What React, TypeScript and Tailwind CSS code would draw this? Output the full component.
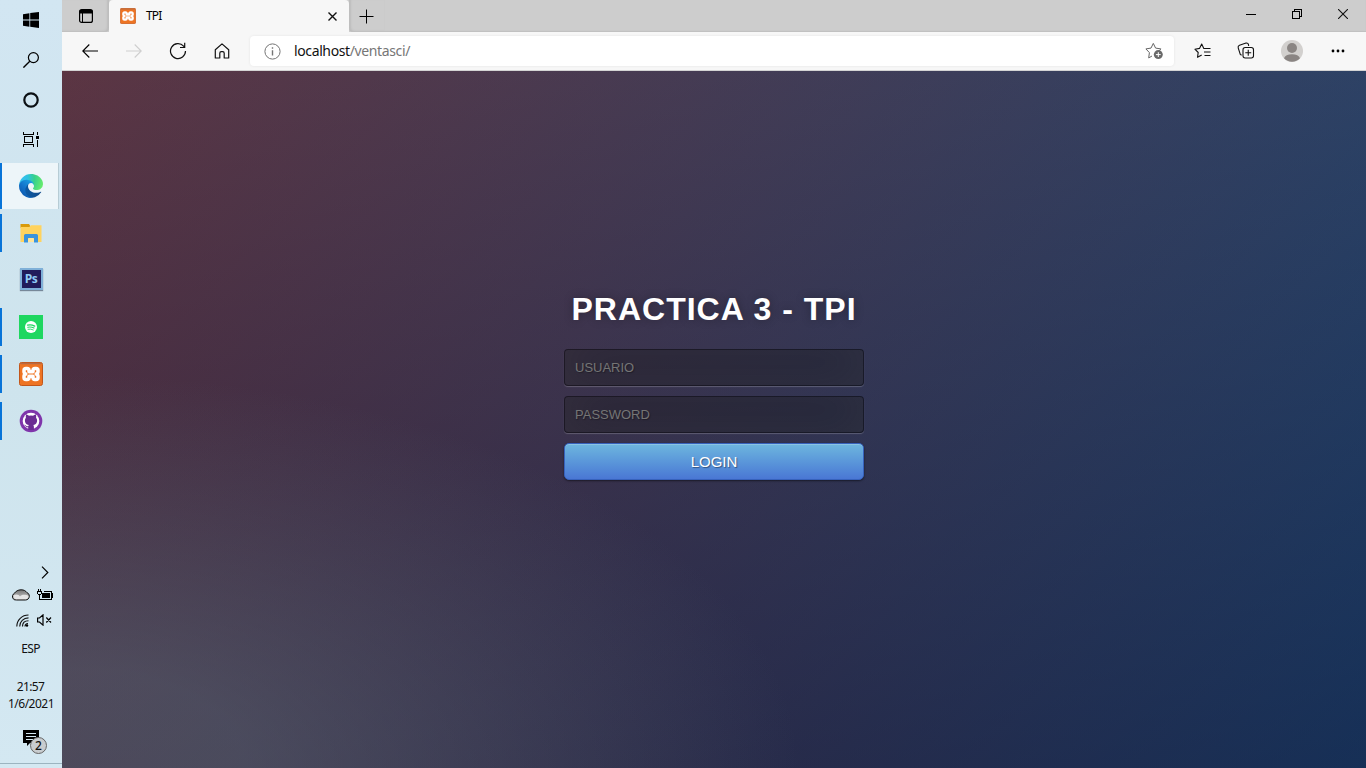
import React from "react";

type IconProps = { className?: string };

function WindowsIcon() {
  return (
    <svg width="16" height="16" viewBox="0 0 16 16" fill="#000">
      <path d="M0 2.2 6.4 1.2V7.4H0zM7.2 1.1 16 0V7.4H7.2zM0 8.4H6.4V14.7L0 13.8zM7.2 8.4H16V16L7.2 14.8z" />
    </svg>
  );
}

function SearchIcon() {
  return (
    <svg width="16" height="16" viewBox="0 0 16 16" fill="none" stroke="#000" strokeWidth="1.2">
      <circle cx="10.4" cy="5.6" r="5" />
      <path d="M6.8 9.2 .4 15.6" strokeWidth="1.4" />
    </svg>
  );
}

function CortanaIcon() {
  return (
    <svg width="16" height="16" viewBox="0 0 16 16" fill="none" stroke="#0b1014" strokeWidth="2.2">
      <circle cx="8" cy="8" r="6.7" />
    </svg>
  );
}

function TaskViewIcon() {
  return (
    <svg width="16" height="15" viewBox="0 0 16 15" fill="none" stroke="#000" shapeRendering="crispEdges">
      <path d="M.5 0V2.500H10.500V0M1.500 4.500H9.500V10.500H1.500zM.5 15V12.500H10.500V15M14.500 0V3M14.500 8V15" />
      <rect x="13" y="4" width="3" height="3" fill="#000" stroke="none" />
    </svg>
  );
}

function EdgeIcon() {
  return (
    <svg width="24" height="24" viewBox="0 0 256 256">
      <defs>
        <linearGradient id="edgeDark" x1="63" x2="241" y1="178" y2="178" gradientUnits="userSpaceOnUse">
          <stop stopColor="#0c59a4" />
          <stop offset="1" stopColor="#114a8b" />
        </linearGradient>
        <linearGradient id="edgeMid" x1="153" x2="46" y1="100" y2="216" gradientUnits="userSpaceOnUse">
          <stop stopColor="#1b9de2" />
          <stop offset=".6" stopColor="#1374cb" />
          <stop offset="1" stopColor="#0e5fb5" />
        </linearGradient>
        <radialGradient id="edgeTop" cx="26" cy="46" r="232" gradientUnits="userSpaceOnUse">
          <stop stopColor="#35c1f1" />
          <stop offset=".3" stopColor="#2fc2df" />
          <stop offset=".6" stopColor="#36d08c" />
          <stop offset="1" stopColor="#66eb6e" />
        </radialGradient>
      </defs>
      <path fill="url(#edgeDark)" d="M231 190a94 94 0 0 1-10.500 4.700 102 102 0 0 1-35.900 6.500c-47.300 0-88.500-32.500-88.500-74.300A31.500 31.500 0 0 1 112.600 99.500c-42.800 1.800-53.800 46.400-53.800 72.500 0 73.900 68.100 81.400 82.800 81.400 7.900 0 19.800-2.300 27-4.600l1.300-.4a128.300 128.300 0 0 0 66.600-52.800 4 4 0 0 0-5.500-5.600z" />
      <path fill="url(#edgeMid)" d="M105.700 241.400A79.200 79.200 0 0 1 83 220.100 80.700 80.700 0 0 1 112.500 99.600c3.200-1.500 8.500-4.100 15.600-4a32.400 32.400 0 0 1 25.700 13 31.900 31.900 0 0 1 6.300 18.700c0-.2 24.500-79.600-80-79.600C36.200 47.700.1 89.300.1 126a130.200 130.200 0 0 0 12.100 56 128 128 0 0 0 156.400 67 75.500 75.500 0 0 1-62.800-8z" />
      <path fill="url(#edgeTop)" d="M152.300 148.900c-.9 1-3.400 2.500-3.400 5.600 0 2.600 1.700 5.200 4.800 7.300 14.400 10 41.500 8.700 41.600 8.700 10.700 0 21.100-2.900 30.300-8.300A61.400 61.400 0 0 0 256 109.200c.3-22.500-8-37.400-11.300-44C223.500 23.800 177.700 0 128 0A128 128 0 0 0 0 126.200c.5-36.500 36.800-66 80-66 3.500 0 23.500.3 42 10 16.300 8.600 24.900 19 30.800 29.200 6.200 10.700 7.300 24.100 7.300 29.500s-2.700 13.300-7.800 20z" />
    </svg>
  );
}

function FolderIcon() {
  return (
    <svg width="22" height="19" viewBox="0 0 22 19">
      <path d="M.5 0H9l1.300 2L9 4H.5z" fill="#d99a0b" />
      <path d="M.5 3H9.500L11 1.200H21.500V18H.5z" fill="#ffd35f" />
      <path d="M4 18V11.500Q4 10 5.500 10H16.500Q18 10 18 11.500V18.500H14V15Q14 14 13 14H9Q8 14 8 15V18.500H4z" fill="#3a93dd" />
      <path d="M8 15Q8 14 9 14H13Q14 14 14 15V18H8z" fill="#ffe59b" />
    </svg>
  );
}

function PhotoshopIcon() {
  return (
    <span className="mb-[3px] flex h-[22px] w-[23px] items-center justify-center border-2 border-[#7fb0d8] bg-[#211c5b] font-['Open_Sans',sans-serif] text-[12px] leading-none font-bold tracking-[-0.4px] text-[#8fcaf5] shadow-[0_1px_1px_#789]">
      Ps
    </span>
  );
}

function SpotifyIcon() {
  return (
    <svg width="24" height="24" viewBox="0 0 24 24" fill="none" stroke="#1ed760" strokeLinecap="round">
      <path d="M0 0H24V24H0z" fill="#1ed760" stroke="none" />
      <circle cx="12" cy="12" r="6" fill="#fff" stroke="none" />
      <path d="M8.500 10.200q3.700-1 7.200.9" strokeWidth="1.300" />
      <path d="M8.800 12.300q3.200-.8 6.200.8" strokeWidth="1.100" />
      <path d="M9 14.200q2.800-.6 5.300.7" strokeWidth=".9" />
    </svg>
  );
}

function XamppIcon({ className }: IconProps) {
  return (
    <svg className={className} viewBox="0 0 24 24" fill="none">
      <rect x=".5" y=".5" width="23" height="23" rx="2" fill="#ee7423" stroke="#c2561a" />
      <path d="M1.500 1.500H22.500" stroke="#b86a43" strokeWidth="1.500" />
      <path
        d="M8 6.600H7a2 2 0 0 0-2 2v1a2.500 2.500 0 0 0 1.800 2.400A2.500 2.500 0 0 0 5 14.400v1a2 2 0 0 0 2 2h1a2 2 0 0 0 2-2v-1.200h4v1.200a2 2 0 0 0 2 2h1a2 2 0 0 0 2-2v-1a2.500 2.500 0 0 0-1.800-2.400A2.500 2.500 0 0 0 19 9.600v-1a2 2 0 0 0-2-2h-1a2 2 0 0 0-2 2v1.200h-4V8.600a2 2 0 0 0-2-2z"
        stroke="#fff"
        strokeWidth="3.500"
        strokeLinejoin="round"
      />
    </svg>
  );
}

function GithubIcon() {
  return (
    <svg width="24" height="24" viewBox="0 0 24 24">
      <circle cx="12" cy="12" r="11.300" fill="#7f35ab" />
      <circle cx="12" cy="12" r="8.300" fill="#fff" />
      <path
        d="M9.200 21v-2.800c-2 .3-2.800-.7-3.300-1.600l-.9-.8c1.500-.3 1.900 1.200 3.100 1.400h1.200l.4-1.100C7 15.700 5.900 13.800 5.900 11.600c0-1 .4-2 1-2.800-.2-.9-.2-2.100.2-3.200 1.100 0 2 .6 2.800 1.200a9 9 0 0 1 4.200 0c.8-.6 1.700-1.200 2.800-1.200.4 1.100.4 2.300.2 3.200.6.800 1 1.800 1 2.800 0 2.200-1.100 4.100-3.800 4.500.4.500.6 1.100.6 1.900v3z"
        fill="#6b2c94"
      />
    </svg>
  );
}

function CloudIcon() {
  return (
    <svg width="18" height="12" viewBox="0 0 18 12">
      <defs>
        <linearGradient id="cloudFill" x1="0" y1="0" x2="0" y2="1">
          <stop stopColor="#777" />
          <stop offset="1" stopColor="#ccc" />
        </linearGradient>
      </defs>
      <path
        d="M4.500 11A3.500 3.500 0 0 1 2 4.600C3.800 2.300 6 .8 9 .8c3 0 4.600 1 5.800 2.700C16.500 4.200 17.300 5.500 17.300 7.200 17.300 9.400 15.600 11 13.500 11z"
        fill="url(#cloudFill)"
      />
      <path d="M1.500 6.500C4 4.500 7 5.500 8 7.500c1-1.700 5-2.500 9-.5-.3 2.300-1.800 3.500-4 3.500H4.500C2.700 10 1.500 8.500 1.500 6.500z" fill="#e5e5e5" />
      <path
        d="M4.500 11A3.500 3.500 0 0 1 2 4.600C3.800 2.300 6 .8 9 .8c3 0 4.600 1 5.800 2.700C16.500 4.200 17.300 5.500 17.300 7.200 17.300 9.400 15.600 11 13.500 11z"
        fill="none"
        stroke="#111"
      />
    </svg>
  );
}

function BatteryIcon() {
  return (
    <svg width="16" height="12" viewBox="0 0 16 12" shapeRendering="crispEdges" fill="none" stroke="#000">
      <path d="M7 2.500H14.500V10.500H3M15.500 4V9M1.500 0V2M3.500 0V2M.5 2V5M4.500 2V5M0 2.500H5M1 5.500H4M2.500 6V11" />
      <rect x="5" y="4" width="8" height="5" fill="#000" stroke="none" />
    </svg>
  );
}

function WifiIcon() {
  return (
    <svg width="13" height="13" viewBox="0 0 13 13" fill="none" stroke="#111" strokeWidth="1.100">
      <path d="M.8 12.500C.8 6 6 1 12.500 1M3.700 12.500C3.700 7.500 7.500 3.900 12.500 3.900M6.500 12.500C6.500 9 9 6.800 12.500 6.800" />
      <path d="M9 12.500a3 3 0 0 1 3-3" />
      <circle cx="11" cy="11.500" r="1.200" fill="#000" stroke="none" />
    </svg>
  );
}

function MutedIcon() {
  return (
    <svg width="15" height="12" viewBox="0 0 15 12" fill="none" stroke="#000" strokeWidth="1.200">
      <path d="M.6 4H2.500L6 .9V11.100L2.500 8H.6zM9.300 3.500l4.700 5M14 3.500l-4.700 5" />
    </svg>
  );
}

function TaskItem({ children, open, active }: { children: React.ReactNode; open?: boolean; active?: boolean }) {
  return (
    <div className="flex h-[47px] items-start">
      <span
        className={
          active
            ? "h-[46px] w-[2px] bg-[#0874d8]"
            : open
              ? "mt-1 h-[38px] w-[2px] bg-[#0874d8]"
              : "mt-1 h-[38px] w-[2px]"
        }
      />
      <span
        className={
          active
            ? "flex h-[46px] w-[57px] items-center justify-center border-r border-[#b7ccd5] bg-[#edf5f9] pl-[2px]"
            : "flex h-[46px] w-[58px] items-center justify-center"
        }
      >
        {children}
      </span>
    </div>
  );
}

function Taskbar() {
  return (
    <aside className="flex h-full w-[62px] shrink-0 flex-col bg-linear-to-b from-[#d2e6f2] via-[#cee4ed] to-[#d4e8f2] font-['Noto_Sans','Open_Sans',sans-serif] text-[#111]">
      <div className="flex h-10 items-center justify-center"><WindowsIcon /></div>
      <div className="flex h-10 items-center justify-center"><SearchIcon /></div>
      <div className="flex h-10 items-center justify-center"><CortanaIcon /></div>
      <div className="mb-[3px] flex h-10 items-center justify-center pb-px"><TaskViewIcon /></div>
      <TaskItem active><EdgeIcon /></TaskItem>
      <TaskItem open><FolderIcon /></TaskItem>
      <TaskItem><PhotoshopIcon /></TaskItem>
      <TaskItem open><SpotifyIcon /></TaskItem>
      <TaskItem open><XamppIcon className="size-6" /></TaskItem>
      <TaskItem open><GithubIcon /></TaskItem>

      <div className="mt-auto flex h-[204px] flex-col">
        <div className="flex h-4 items-center justify-end pr-[13px]">
          <svg width="8" height="13" viewBox="0 0 8 13" fill="none" stroke="#000" strokeWidth="1.200">
            <path d="M1 .7 6.800 6.500 1 12.300" />
          </svg>
        </div>
        <div className="mt-[9px] flex h-3 items-center gap-[7px] pl-3">
          <CloudIcon />
          <BatteryIcon />
        </div>
        <div className="mt-3 flex h-[14px] items-center gap-2 pl-4">
          <WifiIcon />
          <MutedIcon />
        </div>
        <div className="mt-[14px] pr-px text-center text-[12px] leading-4 tracking-[-0.65px]">ESP</div>
        <div className="mt-[21px] pr-px text-center text-[12px] leading-[17px] tracking-[-0.6px]">21:57</div>
        <div className="text-center text-[12px] leading-[17px] tracking-[-0.5px]">1/6/2021</div>
        <div className="relative mt-[18px] ml-[23px] h-[33px] w-6">
          <svg width="16" height="16" viewBox="0 0 16 16">
            <path d="M0 0H16V13H7L4 16V13H0z" fill="#000" />
            <path d="M3 3.500H13M3 6.500H13M3 9.500H10" stroke="#d4e8f2" />
          </svg>
          <span className="absolute top-[7px] left-[7px] flex size-[17px] items-center justify-center rounded-full border border-[#666] bg-[#c8cccf] text-[12px] leading-none font-medium">
            2
          </span>
        </div>
        <div className="border-t border-[#9cb4c0]" />
      </div>
    </aside>
  );
}

function TabStrip() {
  return (
    <div className="flex h-8 items-stretch bg-[#cdcdcd]">
      <div className="flex w-[47px] items-center justify-center rounded-br-[4px] pl-px shadow-[inset_-2px_-1px_2px_#bdbdbd]">
        <svg width="14" height="14" viewBox="0 0 14 14" fill="none" stroke="#000">
          <rect x=".6" y=".6" width="12.800" height="12.800" rx="2" strokeWidth="1.200" />
          <path d="M1 1.500H13V4H1z" fill="#000" />
          <path d="M3.500 4V13" />
        </svg>
      </div>
      <div className="flex w-[240px] items-center rounded-t-[4px] bg-[#f7f7f7] pr-[11px] pl-[11px] font-['Noto_Sans',sans-serif] text-[12px] text-black">
        <XamppIcon className="size-4" />
        <span className="ml-[10px] tracking-[-0.8px]">TPI</span>
        <svg className="ml-auto" width="11" height="11" viewBox="0 0 11 11" stroke="#111" strokeWidth="1.400">
          <path d="M1.500 1.500l8 8M9.500 1.500l-8 8" />
        </svg>
      </div>
      <div className="flex w-[35px] items-center justify-center rounded-bl-[4px] shadow-[inset_2px_-1px_2px_#bdbdbd]">
        <svg width="15" height="15" viewBox="0 0 15 15" stroke="#000">
          <path d="M7.500 .5V14.500M.5 7.500H14.500" />
        </svg>
      </div>
      <div className="flex flex-1 justify-end shadow-[inset_0_-1px_1px_#c0c0c0]">
        <div className="flex w-[46px] items-center justify-center pb-[3px]">
          <svg width="10" height="1" viewBox="0 0 10 1"><path d="M0 0H10V1H0z" /></svg>
        </div>
        <div className="flex w-[46px] items-center justify-center pb-1">
          <svg width="10" height="10" viewBox="0 0 10 10" fill="none" stroke="#000" shapeRendering="crispEdges">
            <path d="M.5 2.500H7.500V9.500H.5zM2.500 2V.5H9.500V7.500H8" />
          </svg>
        </div>
        <div className="flex w-[46px] items-center justify-center pb-1">
          <svg width="10" height="10" viewBox="0 0 10 10" fill="none" stroke="#111" strokeWidth="1.100">
            <path d="M0 0l10 10M10 0L0 10" />
          </svg>
        </div>
      </div>
    </div>
  );
}

function NavButton({ children }: { children: React.ReactNode }) {
  return <div className="flex h-full w-11 items-center justify-center">{children}</div>;
}

function ArrowIcon({ className }: IconProps) {
  return (
    <svg className={className} width="16" height="14" viewBox="0 0 16 14" fill="none" stroke="currentColor" strokeWidth="1.100">
      <path d="M16 7H1M7.300 .5 .8 7l6.500 6.500" />
    </svg>
  );
}

function Toolbar() {
  return (
    <div className="flex h-[39px] items-center border-b border-[#d4d4d4] bg-[#f7f7f7] pl-[6px]">
      <NavButton><ArrowIcon className="text-black" /></NavButton>
      <NavButton><ArrowIcon className="rotate-180 text-[#cfcfcf]" /></NavButton>
      <NavButton>
        <svg width="18" height="18" viewBox="0 0 18 18" fill="none" stroke="#111" strokeWidth="1.200">
          <path d="M16.500 9A7.500 7.500 0 1 1 14.600 4.100L15.600 5.300M15.700 .8V5.500H11" />
        </svg>
      </NavButton>
      <NavButton>
        <svg width="16" height="16" viewBox="0 0 16 16" fill="none" stroke="#111" strokeWidth="1.200" strokeLinejoin="round">
          <path d="M1.300 6.800 8 .9l6.700 5.900V15H10.200V10.200Q10.200 8.700 8.700 8.700H7.300Q5.800 8.700 5.800 10.200V15H1.300z" />
        </svg>
      </NavButton>
      <div className="ml-[6px] flex h-[30px] flex-1 items-center rounded-[4px] bg-white pr-[10px] pl-[14px] shadow-[0_0_3px_rgba(0,0,0,0.08)]">
        <svg width="17" height="17" viewBox="0 0 17 17" fill="none" stroke="#757575">
          <circle cx="8.500" cy="8.500" r="7.600" />
          <path d="M8.500 7.200V12.500M8.500 4.300V5.800" strokeWidth="1.400" />
        </svg>
        <span className="ml-[13px] font-['Noto_Sans',sans-serif] text-[14px] leading-5 tracking-[-0.38px] text-[#767676]">
          <span className="text-[#111]">localhost</span>/ventasci/
        </span>
        <svg className="ml-auto" width="19" height="18" viewBox="0 0 19 18" fill="none" stroke="#666">
          <path d="M7 14 3.700 15.900 4.400 10.600 .9 6.900 6 6.100 8.300 1.400 10.600 6.100 15.900 6.900 14 8.900" strokeLinejoin="round" />
          <circle cx="13.300" cy="12.600" r="4.500" fill="#696969" stroke="none" />
          <path d="M13.300 10.200V15M10.900 12.600H15.700" stroke="#fff" />
        </svg>
      </div>
      <div className="flex h-full pr-[6px] pl-[6px]">
        <NavButton>
          <svg width="17" height="16" viewBox="0 0 17 16" fill="none" stroke="#111" strokeWidth="1.100" strokeLinejoin="round">
            <path d="M10.500 5.500H9.800L7.700 1 5.500 5.400 .9 6.200 4.200 9.500 3.500 14.300 7.700 12.100M10.300 5.500H16.500M10 9H16.500M10.500 12.500H16.500" />
          </svg>
        </NavButton>
        <NavButton>
          <svg width="18" height="18" viewBox="0 0 18 18" fill="none" stroke="#111" strokeWidth="1.100">
            <path d="M4.600 13.300 3.300 12.400 1.200 5.800Q.7 3.900 2.500 3.200L9 1.100Q10.800.7 11.400 2.300L11.700 4" />
            <rect x="6" y="5.500" width="10.500" height="10.500" rx="2.200" />
            <path d="M11.250 7.800V13.700M8.300 10.750H14.200" />
          </svg>
        </NavButton>
        <div className="flex h-full w-12 items-center justify-center">
          <svg width="22" height="22" viewBox="0 0 22 22">
            <circle cx="11" cy="11" r="11" fill="#d2d0ce" />
            <circle cx="11" cy="8" r="5" fill="#8a8583" />
            <path d="M3 18.200Q4.500 14.300 11 14.300T19 18.200A11 11 0 0 1 3 18.200z" fill="#8a8583" />
          </svg>
        </div>
        <NavButton>
          <svg width="14" height="4" viewBox="0 0 14 4">
            <circle cx="2" cy="2" r="1.400" /><circle cx="7" cy="2" r="1.400" /><circle cx="12" cy="2" r="1.400" />
          </svg>
        </NavButton>
      </div>
    </div>
  );
}

const inputClass =
  "mb-[10px] block h-[37px] w-full rounded-[4px] border border-[rgba(0,0,0,0.3)] bg-[rgba(0,0,0,0.3)] px-[10px] text-[13px] text-white outline-none [text-shadow:1px_1px_1px_rgba(0,0,0,0.3)] placeholder:text-[#757575] shadow-[inset_0_-5px_45px_rgba(100,100,100,0.2),0_1px_1px_rgba(255,255,255,0.2)]";

function LoginPage() {
  return (
    <main className="flex flex-1 flex-col items-center bg-[radial-gradient(ellipse_farthest-corner_at_0%_100%,rgba(104,128,138,0.4)_10%,rgba(138,114,76,0)_40%),linear-gradient(to_bottom,rgba(57,173,219,0.25)_0%,rgba(42,60,87,0.4)_100%),linear-gradient(135deg,#670d10_0%,#092756_100%)] pt-[219px] font-['Liberation_Sans',Arial,sans-serif]">
      <form className="w-[300px]" onSubmit={(e) => e.preventDefault()}>
        <h1 className="mb-[21px] text-center text-[32px] leading-[38px] font-bold tracking-[1px] whitespace-nowrap text-white [text-shadow:0_0_10px_rgba(0,0,0,0.3)]">
          PRACTICA 3 - TPI
        </h1>
        <input className={inputClass} type="text" placeholder="USUARIO" />
        <input className={inputClass} type="password" placeholder="PASSWORD" />
        <button
          type="submit"
          className="block h-[37px] w-full rounded-[5px] border border-[#3762bc] bg-[#4a77d4] bg-linear-to-b from-[#6eb6de] to-[#4a77d4] text-[15px] leading-none text-white [text-shadow:1px_1px_1px_rgba(0,0,0,0.4)] shadow-[inset_0_1px_0_rgba(255,255,255,0.2),0_1px_2px_rgba(0,0,0,0.5)]"
        >
          LOGIN
        </button>
      </form>
    </main>
  );
}

export default function App() {
  return (
    <div className="flex h-[768px] w-[1366px] overflow-hidden">
      <Taskbar />
      <div className="flex min-w-0 flex-1 flex-col">
        <TabStrip />
        <Toolbar />
        <LoginPage />
      </div>
    </div>
  );
}
